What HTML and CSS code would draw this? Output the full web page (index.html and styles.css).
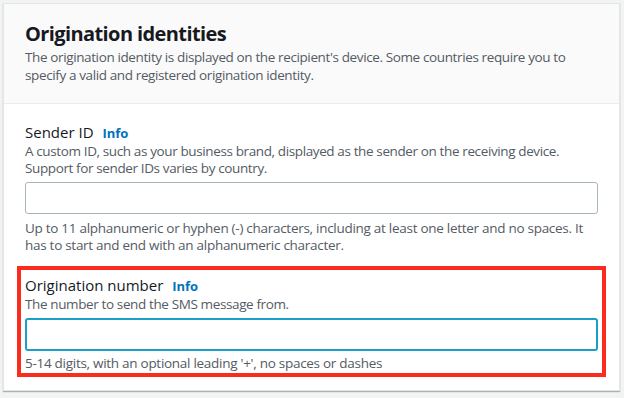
FILE: index.html
```html
<!DOCTYPE html>
<html lang="en">
<head>
    <meta charset="UTF-8">
    <meta name="viewport" content="width=device-width, initial-scale=1.0">
    <title>Origination identities</title>
    <link rel="stylesheet" href="styles.css">
</head>
<body>
    <div class="card">
        <div class="card-header">
            <h2>Origination identities</h2>
            <p class="desc">The origination identity is displayed on the recipient's device. Some countries require you to specify a valid and registered origination identity.</p>
        </div>
        <div class="card-body">
            <div class="field">
                <label for="sender_id">Sender ID <a href="#" class="info">Info</a></label>
                <p class="desc">A custom ID, such as your business brand, displayed as the sender on the receiving device. Support for sender IDs varies by country.</p>
                <input type="text" id="sender_id">
                <p class="hint">Up to 11 alphanumeric or hyphen (-) characters, including at least one letter and no spaces. It has to start and end with an alphanumeric character.</p>
            </div>
            <div class="field highlight">
                <label for="origination_number">Origination number <a href="#" class="info">Info</a></label>
                <p class="desc">The number to send the SMS message from.</p>
                <input type="text" id="origination_number" class="focused">
                <p class="hint">5-14 digits, with an optional leading '+', no spaces or dashes</p>
            </div>
        </div>
    </div>
</body>
</html>
```

FILE: styles.css
```css
body {
    margin: 0;
    padding: 3px 4px 8px 3px;
    background-color: #f2f3f3;
    font-family: "Open Sans", Arial, sans-serif;
    color: #16191f;
}
.card {
    background-color: #fff;
    border: 1px solid #e4e6e6;
    box-shadow: 0 1px 1px rgba(0, 28, 36, 0.3);
}
.card-header {
    background-color: #fafafa;
    border-bottom: 1px solid #eaeded;
    padding: 17px 21px 19px;
}
h2 {
    margin: 0;
    font-size: 20px;
    line-height: 26px;
    letter-spacing: -0.6px;
    font-weight: bold;
}
.desc {
    margin: 0;
    font-size: 13.5px;
    line-height: 17px;
    letter-spacing: -0.38px;
    color: #545b64;
}
.card-header .desc {
    margin-top: 1px;
    line-height: 18px;
}
.card-body {
    padding: 14px 13px 13px;
}
.field {
    padding: 0 4px;
    border: 4px solid transparent;
}
label {
    display: block;
    font-size: 15px;
    line-height: 20px;
}
.info {
    margin-left: 5px;
    font-size: 13px;
    font-weight: bold;
    color: #0073bb;
    text-decoration: none;
}
input[type="text"] {
    display: block;
    box-sizing: border-box;
    width: 100%;
    height: 32px;
    margin: 5px 0 0;
    border: 1px solid #aab7b8;
    border-radius: 3px;
}
input.focused {
    height: 33px;
    border: 2px solid #1a9fc8;
}
.hint {
    margin: 6px 0 0;
    font-size: 13.5px;
    line-height: 17px;
    letter-spacing: -0.28px;
    color: #545b64;
}
.highlight {
    margin-top: 8px;
    border-color: #fb2b1e;
    padding-top: 5px;
    padding-bottom: 1px;
}
.highlight .hint {
    margin-top: 4px;
}
```
